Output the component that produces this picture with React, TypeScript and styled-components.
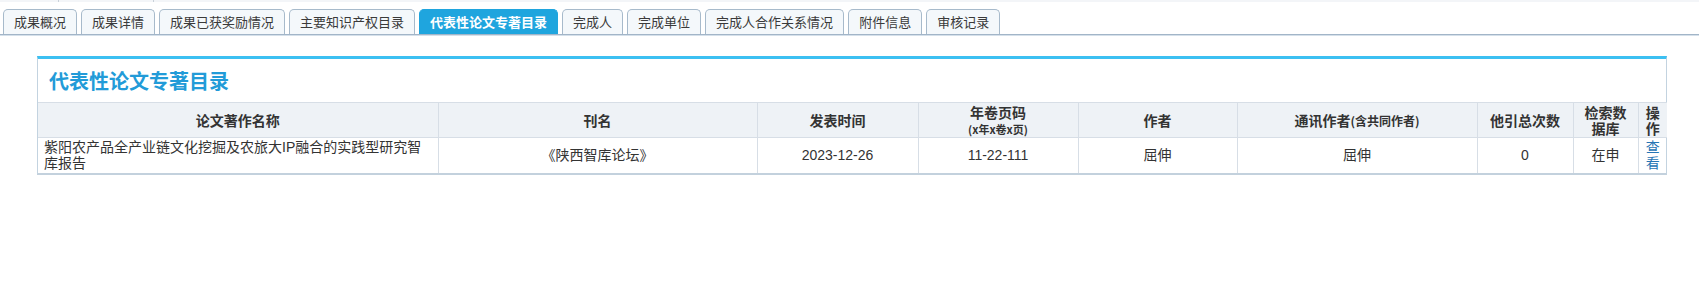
import styled, { createGlobalStyle } from "styled-components";

const GlobalStyle = createGlobalStyle`
  * { box-sizing: border-box; }
  body {
    margin: 0;
    background: #ffffff;
    color: #333333;
    font-family: "Liberation Sans", "Noto Sans CJK SC", sans-serif;
  }
`;

const Page = styled.div`
  width: 1699px;
  min-height: 295px;
`;

const TopStrip = styled.div`
  display: flex;
  height: 2px;
  background: #f3f5f8;
`;

const StripCell = styled.div<{ $w: number }>`
  width: ${(p) => p.$w}px;
  border-right: 1px solid #c9d1d9;
`;

const TabBar = styled.div`
  display: flex;
  align-items: flex-end;
  gap: 4px;
  padding: 7px 0 0 3px;
  border-bottom: 1px solid #a2b5c8;
  box-shadow: 0 1px 0 #d5e0ea;
`;

const Tab = styled.div<{ $active?: boolean }>`
  height: 25px;
  padding: 0 10px;
  line-height: 24px;
  font-size: 13px;
  white-space: nowrap;
  border: 1px solid ${(p) => (p.$active ? "#1fa5de" : "#a7bacb")};
  border-bottom: none;
  border-radius: 5px 5px 0 0;
  background: ${(p) => (p.$active ? "#1fa5de" : "#f4f8fb")};
  color: ${(p) => (p.$active ? "#ffffff" : "#3a3a3a")};
  font-weight: ${(p) => (p.$active ? "bold" : "normal")};
  font-family: "Noto Sans CJK SC", sans-serif;
`;

const Panel = styled.section`
  margin: 21px 0 0 37px;
  width: 1630px;
  border: 1px solid #c3d3e0;
  border-top: 3px solid #3cc0f2;
  border-bottom: 2px solid #c3d1dd;
`;

const Title = styled.h2`
  margin: 0;
  height: 43px;
  padding-left: 11px;
  display: flex;
  align-items: center;
  font-size: 20px;
  font-weight: bold;
  color: #229bd8;
  font-family: "Noto Sans CJK SC", sans-serif;
`;

const Table = styled.table`
  width: 100%;
  border-collapse: collapse;
  table-layout: fixed;
`;

const Th = styled.th<{ $w: number }>`
  width: ${(p) => p.$w}px;
  height: 35px;
  padding: 0 6px;
  background: #eef2f6;
  border: 1px solid #d7dee6;
  font-size: 14px;
  line-height: 16px;
  font-weight: bold;
  color: #333333;
  text-align: center;
  font-family: "Noto Sans CJK SC", sans-serif;

  &:first-child { border-left: none; }
  &:last-child { border-right: none; }
`;

const Small = styled.span<{ $size: number }>`
  font-size: ${(p) => p.$size}px;
`;

const Td = styled.td<{ $left?: boolean }>`
  height: 35px;
  padding: ${(p) => (p.$left ? "0 12px 0 6px" : "0 6px")};
  border: 1px solid #d7dee6;
  border-bottom: none;
  font-size: 14px;
  line-height: 16px;
  color: #333333;
  text-align: ${(p) => (p.$left ? "left" : "center")};

  &:first-child { border-left: none; }
  &:last-child { border-right: none; }
`;

const ViewLink = styled.a`
  color: #2675b5;
  text-decoration: none;
  cursor: pointer;
`;

const tabs = [
  "成果概况",
  "成果详情",
  "成果已获奖励情况",
  "主要知识产权目录",
  "代表性论文专著目录",
  "完成人",
  "完成单位",
  "完成人合作关系情况",
  "附件信息",
  "审核记录",
];

const rows = [
  {
    name: "紫阳农产品全产业链文化挖掘及农旅大IP融合的实践型研究智库报告",
    journal: "《陕西智库论坛》",
    date: "2023-12-26",
    pages: "11-22-111",
    author: "屈伸",
    contact: "屈伸",
    cited: "0",
    db: "在申",
  },
];

export default function App() {
  const active = "代表性论文专著目录";

  return (
    <Page>
      <GlobalStyle />
      <TopStrip>
        <StripCell $w={59} />
        <StripCell $w={95} />
      </TopStrip>
      <TabBar>
        {tabs.map((t) => (
          <Tab key={t} $active={t === active}>
            {t}
          </Tab>
        ))}
      </TabBar>
      <Panel>
        <Title>代表性论文专著目录</Title>
        <Table>
          <thead>
            <tr>
              <Th $w={400}>论文著作名称</Th>
              <Th $w={319}>刊名</Th>
              <Th $w={161}>发表时间</Th>
              <Th $w={160}>
                年卷页码
                <br />
                <Small $size={11}>(x年x卷x页)</Small>
              </Th>
              <Th $w={159}>作者</Th>
              <Th $w={240}>
                通讯作者<Small $size={12}>(含共同作者)</Small>
              </Th>
              <Th $w={96}>他引总次数</Th>
              <Th $w={65}>检索数据库</Th>
              <Th $w={29}>操作</Th>
            </tr>
          </thead>
          <tbody>
            {rows.map((r) => (
              <tr key={r.name}>
                <Td $left>{r.name}</Td>
                <Td>{r.journal}</Td>
                <Td>{r.date}</Td>
                <Td>{r.pages}</Td>
                <Td>{r.author}</Td>
                <Td>{r.contact}</Td>
                <Td>{r.cited}</Td>
                <Td>{r.db}</Td>
                <Td>
                  <ViewLink>查看</ViewLink>
                </Td>
              </tr>
            ))}
          </tbody>
        </Table>
      </Panel>
    </Page>
  );
}
